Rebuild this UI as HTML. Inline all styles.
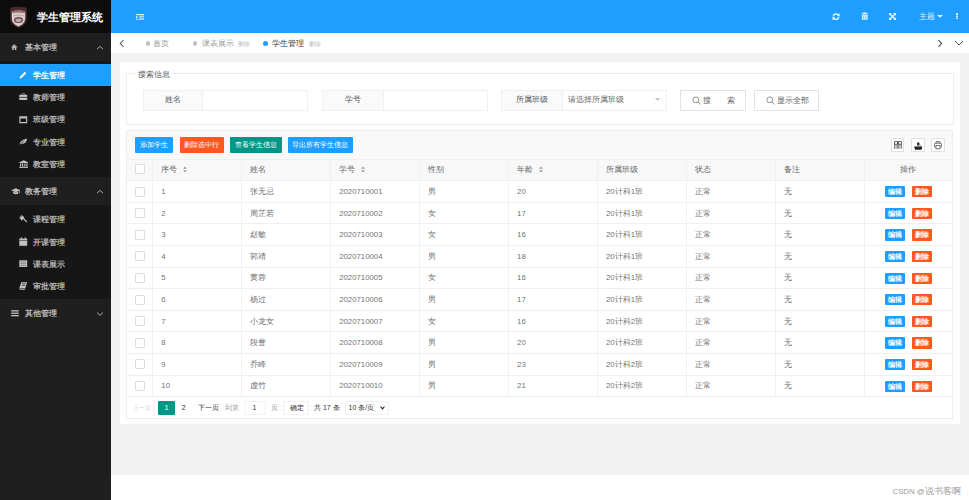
<!DOCTYPE html><html><head><meta charset="utf-8"><style>
*{box-sizing:border-box;margin:0;padding:0}
html,body{width:969px;height:500px;overflow:hidden;background:#fff;font-family:"Liberation Sans",sans-serif;color:#666}
.a{position:absolute}
.t{position:absolute;white-space:nowrap}
#side{left:0;top:0;width:111px;height:500px;background:#1f1f1f}
#logo{left:0;top:0;width:111px;height:33px;background:#0c0c0c}
#title{left:37px;top:8.7px;font-size:11px;font-weight:bold;color:#fff;line-height:16px}
#head{left:111px;top:0;width:858px;height:33px;background:#1E9FFF}
#tabs{left:111px;top:33px;width:858px;height:20px;background:#fff}
#main{left:111px;top:53px;width:858px;height:422px;background:#f2f2f2}
.nh{left:0;width:111px;height:28px;background:#1f1f1f}
.nc{left:0;width:111px;background:#161616}
.ni{left:0;width:111px;height:22.2px}
.ni.on{background:#1E9FFF}
.nt{font-size:8px;line-height:10px;color:#b3afaf;font-weight:bold}
.card{background:#fff}
.bx{position:absolute;border:1px solid #f0f0f0;background:#fff}
.lab{position:absolute;border:1px solid #f0f0f0;background:#fafafa}
.btn{position:absolute;color:#fff;font-size:6.8px;line-height:16px;text-align:center;border-radius:1px}
.cell{position:absolute;font-size:7.8px;line-height:10px;color:#737373;white-space:nowrap}
.hl{position:absolute;height:1px;background:#efefef}
.vl{position:absolute;width:1px;background:#f1f1f1}
.cbx{position:absolute;width:10px;height:10px;border:1px solid #dedede;background:#fff;border-radius:1px}
.sb{position:absolute;font-size:6.5px;line-height:11.2px;font-weight:bold;color:#fff;text-align:center;border-radius:1px}
</style></head><body>
<div id="side" class="a"></div><div id="logo" class="a"></div>
<svg class="a" style="left:9px;top:6px" width="19" height="23" viewBox="0 0 19 23">
<path d="M1.2 3 Q1.2 1.4 3 1.2 Q9.5 0.2 16 1.2 Q17.8 1.4 17.8 3 L17.8 12.5 Q17.8 19 9.5 22.2 Q1.2 19 1.2 12.5 Z" fill="#4a2a2a"/>
<path d="M2.8 5.2 Q9.5 4 16.2 5.2 L16.2 12.5 Q16.2 17.8 9.5 20.4 Q2.8 17.8 2.8 12.5 Z" fill="#dccdcd"/>
<path d="M2.8 5.2 Q9.5 4 16.2 5.2 L16.2 7 Q9.5 6 2.8 7 Z" fill="#8c6c6c"/>
<ellipse cx="9.5" cy="14" rx="4.6" ry="3.1" fill="#6e5050"/>
<ellipse cx="9.5" cy="14.2" rx="3" ry="1.8" fill="#bca8a8"/>
<path d="M4.5 9.6 Q9.5 8.2 14.5 9.6" stroke="#a89090" stroke-width="0.7" fill="none"/>
</svg>
<div id="title" class="t">学生管理系统</div>
<div id="head" class="a"></div><div id="tabs" class="a"></div><div id="main" class="a"></div>
<div class="a nh" style="top:33px"></div>
<div class="t nt" style="left:24.5px;top:42.9px;color:#bbb7b7">基本管理</div>
<svg class="a" style="left:95.5px;top:44.8px" width="8" height="6" viewBox="0 0 8 6"><path d="M1 4.2 L4 1.3 L7 4.2" stroke="#bdbdbd" stroke-width="0.9" fill="none"/></svg>
<div class="a nc" style="top:61px;height:116.2px"></div>
<div class="a ni on" style="top:63.8px"></div>
<div class="t nt" style="left:33px;top:70.89999999999999px;color:#fff">学生管理</div>
<div class="a ni" style="top:86.0px"></div>
<div class="t nt" style="left:33px;top:93.1px;">教师管理</div>
<div class="a ni" style="top:108.19999999999999px"></div>
<div class="t nt" style="left:33px;top:115.29999999999998px;">班级管理</div>
<div class="a ni" style="top:130.39999999999998px"></div>
<div class="t nt" style="left:33px;top:137.49999999999997px;">专业管理</div>
<div class="a ni" style="top:152.6px"></div>
<div class="t nt" style="left:33px;top:159.7px;">教室管理</div>
<div class="a nh" style="top:177.2px"></div>
<div class="t nt" style="left:24.5px;top:187.1px;color:#bbb7b7">教务管理</div>
<svg class="a" style="left:95.5px;top:189.0px" width="8" height="6" viewBox="0 0 8 6"><path d="M1 4.2 L4 1.3 L7 4.2" stroke="#bdbdbd" stroke-width="0.9" fill="none"/></svg>
<div class="a nc" style="top:205.2px;height:94.1px"></div>
<div class="a ni" style="top:208.3px"></div>
<div class="t nt" style="left:33px;top:215.4px;">课程管理</div>
<div class="a ni" style="top:230.5px"></div>
<div class="t nt" style="left:33px;top:237.6px;">开课管理</div>
<div class="a ni" style="top:252.70000000000002px"></div>
<div class="t nt" style="left:33px;top:259.8px;">课表展示</div>
<div class="a ni" style="top:274.9px"></div>
<div class="t nt" style="left:33px;top:282.0px;">审批管理</div>
<div class="a nh" style="top:299.3px"></div>
<div class="t nt" style="left:24.5px;top:309.2px;color:#bbb7b7">其他管理</div>
<svg class="a" style="left:95.5px;top:311.1px" width="8" height="6" viewBox="0 0 8 6"><path d="M1 1.5 L4 4.4 L7 1.5" stroke="#bdbdbd" stroke-width="0.9" fill="none"/></svg>
<svg class="a" style="left:11px;top:44px" width="6.5" height="6" viewBox="0 0 6.5 6"><path d="M0.1 2.9 L3.25 0.2 L6.4 2.9 L5.8 3.5 L3.25 1.4 L0.7 3.5 Z" fill="#c4c0c0"/><path d="M1.2 3.2 L3.25 1.6 L5.3 3.2 V5.9 H3.9 V4.3 H2.6 V5.9 H1.2 Z" fill="#c4c0c0"/></svg>
<svg class="a" style="left:19px;top:71px" width="8" height="8" viewBox="0 0 8 8"><path d="M0.6 7.4 L1.1 5.4 L5.8 0.7 L7.3 2.2 L2.6 6.9 Z" fill="#fff"/></svg>
<svg class="a" style="left:19px;top:92.5px" width="8.5" height="7.5" viewBox="0 0 8.5 7.5"><path d="M2.8 0.5 H5.7 V1.8 H8.2 V7.2 H0.3 V1.8 H2.8 Z M3.4 1.1 V1.8 H5.1 V1.1 Z" fill="#c4c0c0" fill-rule="evenodd"/><rect x="0.3" y="3.9" width="7.9" height="0.7" fill="#161616"/></svg>
<svg class="a" style="left:19px;top:116px" width="8.5" height="7.5" viewBox="0 0 8.5 7.5"><path d="M0.3 0.3 H8.2 V7.2 H0.3 Z M1.4 2.4 V6.1 H7.1 V2.4 Z" fill="#c4c0c0" fill-rule="evenodd"/></svg>
<svg class="a" style="left:19px;top:137.5px" width="8.5" height="7" viewBox="0 0 8.5 7"><path d="M0.5 6.8 Q1 2 8 0.5 Q7.5 6 2.5 5.8 Q1.8 6 0.5 6.8 Z" fill="#c4c0c0"/><path d="M1 6.5 Q3 4 5.5 2.8" stroke="#151515" stroke-width="0.6" fill="none"/></svg>
<svg class="a" style="left:18.5px;top:160px" width="9.5" height="8" viewBox="0 0 9.5 8"><path d="M0.3 2.3 L4.75 0.2 L9.2 2.3 V2.9 H0.3 Z" fill="#c4c0c0"/><rect x="1" y="3.4" width="1.2" height="3" fill="#c4c0c0"/><rect x="3" y="3.4" width="1.2" height="3" fill="#c4c0c0"/><rect x="5.3" y="3.4" width="1.2" height="3" fill="#c4c0c0"/><rect x="7.3" y="3.4" width="1.2" height="3" fill="#c4c0c0"/><rect x="0.3" y="6.7" width="8.9" height="1.2" fill="#c4c0c0"/></svg>
<svg class="a" style="left:11px;top:188px" width="9.5" height="7" viewBox="0 0 9.5 7"><path d="M0.2 2.2 L4.75 0.2 L9.3 2.2 L4.75 4.2 Z" fill="#c4c0c0"/><path d="M2.2 3.4 V5.6 Q4.75 7 7.3 5.6 V3.4 L4.75 4.6 Z" fill="#c4c0c0"/><rect x="8.2" y="2.2" width="0.6" height="3.2" fill="#c4c0c0"/></svg>
<svg class="a" style="left:19px;top:215.3px" width="8.5" height="8" viewBox="0 0 8.5 8"><path d="M0.6 3.2 L3.4 0.4 L5.4 2.4 L2.6 5.2 Z" fill="#c4c0c0"/><path d="M3.8 3.6 L4.6 2.8 L8.2 6.6 L7.4 7.4 Z" fill="#c4c0c0"/><path d="M0.2 2.4 L2.6 0 L3 0.4 L0.6 2.8 Z M2.2 5.4 L4.6 3 L5 3.4 L2.6 5.8 Z" fill="#c4c0c0"/></svg>
<svg class="a" style="left:19px;top:236.5px" width="8.5" height="9" viewBox="0 0 8.5 9"><rect x="0.3" y="1.6" width="7.9" height="7.2" fill="#c4c0c0"/><rect x="1.8" y="0.2" width="1" height="2.3" fill="#c4c0c0"/><rect x="5.7" y="0.2" width="1" height="2.3" fill="#c4c0c0"/><rect x="0.3" y="3.2" width="7.9" height="0.5" fill="#161616"/></svg>
<svg class="a" style="left:19px;top:259.5px" width="8.5" height="7.5" viewBox="0 0 8.5 7.5"><path d="M0.3 0.3 H8.2 V7.2 H0.3 Z" fill="#c4c0c0"/><rect x="1.3" y="1.6" width="5.9" height="0.7" fill="#777"/><rect x="1.3" y="3.4" width="5.9" height="0.7" fill="#777"/><rect x="1.3" y="5.2" width="5.9" height="0.7" fill="#777"/></svg>
<svg class="a" style="left:19px;top:282px" width="8.5" height="8" viewBox="0 0 8.5 8"><path d="M2.2 0.3 H8.2 L6.3 6.2 H0.4 Z" fill="#c4c0c0"/><path d="M0.4 6.2 Q0 7.6 1.2 7.7 H6 L6.3 6.8 H1.5 Z" fill="#c4c0c0"/><rect x="3" y="1.6" width="3.6" height="0.6" fill="#161616"/><rect x="2.6" y="2.9" width="3.6" height="0.6" fill="#161616"/></svg>
<svg class="a" style="left:10.5px;top:310px" width="8" height="6.5" viewBox="0 0 8 6.5"><rect x="0.2" y="0.2" width="7.6" height="1.3" fill="#c4c0c0"/><rect x="0.2" y="2.6" width="7.6" height="1.3" fill="#c4c0c0"/><rect x="0.2" y="5" width="7.6" height="1.3" fill="#c4c0c0"/></svg>
<div class="a" style="left:106px;top:33px;width:1px;height:31px;background:rgba(0,0,0,.12)"></div>
<div class="a" style="left:106px;top:86px;width:1px;height:389px;background:rgba(0,0,0,.12)"></div>
<svg class="a" style="left:119px;top:39.4px" width="6" height="9" viewBox="0 0 6 9"><path d="M4.5 1 L1.3 4.5 L4.5 8" stroke="#555" stroke-width="1.1" fill="none"/></svg>
<svg class="a" style="left:936.5px;top:39.4px" width="7" height="9" viewBox="0 0 7 9"><path d="M1.5 1.2 L4.6 4.5 L1.5 7.8" stroke="#555" stroke-width="1.1" fill="none"/></svg>
<svg class="a" style="left:954px;top:40.4px" width="10" height="6" viewBox="0 0 10 6"><path d="M1 1 L5 5 L9 1" stroke="#555" stroke-width="1" fill="none"/></svg>
<div class="a" style="left:146px;top:41.4px;width:4.4px;height:4.4px;border-radius:50%;background:#c2c2c2"></div>
<div class="t" style="left:153px;top:38.9px;font-size:7.6px;line-height:10px;color:#999">首页</div>
<div class="a" style="left:193px;top:41.4px;width:4.4px;height:4.4px;border-radius:50%;background:#c2c2c2"></div>
<div class="t" style="left:202px;top:38.9px;font-size:7.6px;line-height:10px;color:#999">课表展示</div>
<div class="t" style="left:238px;top:40.4px;font-size:6.2px;line-height:8px;color:#b8b8b8">删除</div>
<div class="a" style="left:263px;top:41.2px;width:5px;height:5px;border-radius:50%;background:#1E9FFF"></div>
<div class="t" style="left:272px;top:38.9px;font-size:7.8px;line-height:10px;color:#333">学生管理</div>
<div class="t" style="left:308.5px;top:40.4px;font-size:6.2px;line-height:8px;color:#b8b8b8">删除</div>
<svg class="a" style="left:135.8px;top:13.8px" width="8" height="6.4" viewBox="0 0 8 6.4">
<rect x="0" y="0" width="8" height="1.1" fill="#cdeef0"/>
<rect x="3" y="1.7" width="5" height="1.1" fill="#bfe6e8"/>
<rect x="3" y="3.5" width="5" height="1.1" fill="#bfe6e8"/>
<rect x="0" y="5.3" width="8" height="1.1" fill="#cdeef0"/>
<path d="M0 1.6 L2.3 3.2 L0 4.8 Z" fill="#bfe6e8"/></svg>
<svg class="a" style="left:831.8px;top:12.5px" width="8" height="7.5" viewBox="0 0 8 7.5">
<path d="M1.2 3.3 A2.9 2.9 0 0 1 6.3 2.1" stroke="#e6f4ff" stroke-width="1.5" fill="none"/><path d="M7.6 0.3 L7.6 3.3 L4.6 3.3 Z" fill="#e6f4ff"/>
<path d="M6.8 4.2 A2.9 2.9 0 0 1 1.7 5.4" stroke="#e6f4ff" stroke-width="1.5" fill="none"/><path d="M0.4 7.2 L0.4 4.2 L3.4 4.2 Z" fill="#e6f4ff"/></svg>
<svg class="a" style="left:860.5px;top:12.3px" width="7.5" height="8" viewBox="0 0 7.5 8">
<path d="M0.3 2.6 Q0.8 0.3 3.75 0.3 Q6.7 0.3 7.2 2.6 Z" fill="#e6f4ff" opacity="0.9"/>
<path d="M0.8 3 H6.7 V7.8 H0.8 Z" fill="#e6f4ff" opacity="0.85"/>
<rect x="2.3" y="3.8" width="0.7" height="3.4" fill="#7cc6ff"/><rect x="4.5" y="3.8" width="0.7" height="3.4" fill="#7cc6ff"/></svg>
<svg class="a" style="left:889.2px;top:13px" width="7" height="7" viewBox="0 0 7 7">
<path d="M0 0 L2.8 0 L0 2.8 Z M7 0 L4.2 0 L7 2.8 Z M0 7 L2.8 7 L0 4.2 Z M7 7 L4.2 7 L7 4.2 Z" fill="#e6f4ff"/>
<path d="M0.8 0.8 L6.2 6.2 M6.2 0.8 L0.8 6.2" stroke="#e6f4ff" stroke-width="1.4"/></svg>
<div class="t" style="left:919px;top:11.7px;font-size:7.8px;line-height:10px;color:#dcf0ff">主题</div>
<svg class="a" style="left:937.4px;top:14.6px" width="6" height="3" viewBox="0 0 6 3"><path d="M0 0 L6 0 L3 2.8 Z" fill="#e6f4ff"/></svg>
<div class="a" style="left:956.4px;top:13px;width:1.8px;height:6.4px;background:#d6eeff"></div>
<div class="a" style="left:956.4px;top:15px;width:1.8px;height:0.5px;background:#6cbfff"></div>
<div class="a" style="left:956.4px;top:17px;width:1.8px;height:0.5px;background:#6cbfff"></div>
<div class="a card" style="left:120px;top:62px;width:840px;height:361.5px"></div>
<div class="a" style="left:126px;top:73px;width:828px;height:52px;border:1px solid #eee"></div>
<div class="t" style="left:135px;top:69.8px;padding:0 3px;background:#fff;font-size:7.8px;line-height:10px;color:#555">搜索信息</div>
<div class="lab" style="left:143px;top:89.5px;width:60px;height:21px"></div>
<div class="t" style="left:143px;top:95.4px;width:60px;text-align:center;font-size:7.8px;line-height:10px;color:#555">姓名</div>
<div class="bx" style="left:202px;top:89.5px;width:106px;height:21px"></div>
<div class="lab" style="left:321.5px;top:89.5px;width:62px;height:21px"></div>
<div class="t" style="left:321.5px;top:95.4px;width:62px;text-align:center;font-size:7.8px;line-height:10px;color:#555">学号</div>
<div class="bx" style="left:382.5px;top:89.5px;width:105px;height:21px"></div>
<div class="lab" style="left:501px;top:89.5px;width:62px;height:21px"></div>
<div class="t" style="left:501px;top:95.4px;width:62px;text-align:center;font-size:7.8px;line-height:10px;color:#555">所属班级</div>
<div class="bx" style="left:562px;top:89.5px;width:105px;height:21px"></div>
<div class="t" style="left:567.5px;top:95.4px;font-size:7.6px;line-height:10px;color:#666">请选择所属班级</div>
<svg class="a" style="left:655px;top:98px" width="5" height="3" viewBox="0 0 5 3"><path d="M0 0 L5 0 L2.5 3 Z" fill="#c2c2c2"/></svg>
<div class="bx" style="left:680px;top:89.5px;width:65.5px;height:21px;border-color:#e2e2e2"></div>
<svg class="a" style="left:692px;top:96px" width="9" height="9" viewBox="0 0 9 9"><circle cx="3.8" cy="3.8" r="2.9" stroke="#888" stroke-width="0.9" fill="none"/><path d="M6 6 L8.4 8.4" stroke="#888" stroke-width="1"/></svg>
<div class="t" style="left:703.3px;top:95.5px;font-size:7.8px;line-height:10px;color:#666;letter-spacing:15.5px">搜索</div>
<div class="bx" style="left:754px;top:89.5px;width:64.5px;height:21px;border-color:#e2e2e2"></div>
<svg class="a" style="left:766px;top:96px" width="9" height="9" viewBox="0 0 9 9"><circle cx="3.8" cy="3.8" r="2.9" stroke="#888" stroke-width="0.9" fill="none"/><path d="M6 6 L8.4 8.4" stroke="#888" stroke-width="1"/></svg>
<div class="t" style="left:777.3px;top:95.5px;font-size:7.8px;line-height:10px;color:#666;">显示全部</div>
<div class="a" style="left:126px;top:130px;width:827px;height:289px;border:1px solid #eee"></div>
<div class="a" style="left:127px;top:131px;width:825px;height:27.80000000000001px;background:#f9f9f9"></div>
<div class="btn" style="left:134.5px;top:137px;width:38.5px;height:16px;background:#1E9FFF">添加学生</div>
<div class="btn" style="left:179.5px;top:137px;width:44.5px;height:16px;background:#FF5722">删除选中行</div>
<div class="btn" style="left:229.5px;top:137px;width:52px;height:16px;background:#009688">查看学生信息</div>
<div class="btn" style="left:287.5px;top:137px;width:65.5px;height:16px;background:#1E9FFF">导出所有学生信息</div>
<div class="bx" style="left:890.6px;top:138.3px;width:13.8px;height:14.2px;border-color:#e2e2e2"></div>
<div class="bx" style="left:910.8px;top:138.3px;width:13.8px;height:14.2px;border-color:#e2e2e2"></div>
<div class="bx" style="left:930.9px;top:138.3px;width:13.8px;height:14.2px;border-color:#e2e2e2"></div>
<svg class="a" style="left:894.2px;top:141.2px" width="8" height="8.2" viewBox="0 0 8 8.2"><path d="M0.4 0.4 H3.5 V3.2 H0.4 Z M4.5 0.4 H7.6 V3.2 H4.5 Z" stroke="#333" stroke-width="0.8" fill="none"/><path d="M0.8 3.2 V7.8 M3.1 3.2 V7.8 M4.9 3.2 V7.8 M7.2 3.2 V7.8" stroke="#333" stroke-width="0.9"/></svg>
<svg class="a" style="left:914.2px;top:141.5px" width="8.6" height="8" viewBox="0 0 8.6 8"><path d="M3 1.2 Q3 0.2 4.2 0.2 Q5.4 0.2 5.4 1.2 V3.6 H3 Z" fill="#333"/><path d="M5.6 2.2 L6.6 3 V3.8 H5.6 Z" fill="#666"/><path d="M0.2 4.4 H8.4 L7.6 7.8 H1 Z" fill="#222"/><rect x="1.5" y="3.8" width="5.6" height="0.6" fill="#888"/></svg>
<svg class="a" style="left:934.2px;top:141.2px" width="8" height="8.4" viewBox="0 0 8 8.4"><path d="M2.2 2.2 V0.5 H5.8 V2.2" fill="none" stroke="#444" stroke-width="0.7"/><path d="M1.6 6.2 H0.8 Q0.4 6.2 0.4 5.6 V3.2 Q0.4 2.2 1.6 2.2 H6.4 Q7.6 2.2 7.6 3.2 V5.6 Q7.6 6.2 7.2 6.2 H6.4" fill="none" stroke="#444" stroke-width="0.8"/><rect x="2" y="4.4" width="4" height="3.5" fill="#fff" stroke="#444" stroke-width="0.7"/></svg>
<div class="a" style="left:127px;top:158.8px;width:825px;height:21.899999999999977px;background:#f8f8f8"></div>
<div class="hl" style="left:126px;top:158.8px;width:827px"></div>
<div class="hl" style="left:126px;top:180.2px;width:827px"></div>
<div class="hl" style="left:126px;top:201.80px;width:827px"></div>
<div class="hl" style="left:126px;top:223.40px;width:827px"></div>
<div class="hl" style="left:126px;top:245.00px;width:827px"></div>
<div class="hl" style="left:126px;top:266.60px;width:827px"></div>
<div class="hl" style="left:126px;top:288.20px;width:827px"></div>
<div class="hl" style="left:126px;top:309.80px;width:827px"></div>
<div class="hl" style="left:126px;top:331.40px;width:827px"></div>
<div class="hl" style="left:126px;top:353.00px;width:827px"></div>
<div class="hl" style="left:126px;top:374.60px;width:827px"></div>
<div class="hl" style="left:126px;top:396.20px;width:827px"></div>
<div class="vl" style="left:152.00px;top:158.8px;height:237.90px"></div>
<div class="vl" style="left:240.94px;top:158.8px;height:237.90px"></div>
<div class="vl" style="left:329.88px;top:158.8px;height:237.90px"></div>
<div class="vl" style="left:418.82px;top:158.8px;height:237.90px"></div>
<div class="vl" style="left:507.76px;top:158.8px;height:237.90px"></div>
<div class="vl" style="left:596.70px;top:158.8px;height:237.90px"></div>
<div class="vl" style="left:685.64px;top:158.8px;height:237.90px"></div>
<div class="vl" style="left:774.58px;top:158.8px;height:237.90px"></div>
<div class="vl" style="left:863.52px;top:158.8px;height:237.90px"></div>
<div class="cbx" style="left:134.5px;top:164.3px"></div>
<div class="cell" style="left:161.30px;top:165.20000000000002px;color:#666;font-size:7.5px">序号</div>
<svg class="a" style="left:183.30px;top:166.4px" width="4" height="7" viewBox="0 0 4 7"><path d="M0.2 2.8 L2 0.6 L3.8 2.8 Z M0.2 4.2 L2 6.4 L3.8 4.2 Z" fill="#999"/></svg>
<div class="cell" style="left:250.24px;top:165.20000000000002px;color:#666;font-size:7.5px">姓名</div>
<div class="cell" style="left:339.18px;top:165.20000000000002px;color:#666;font-size:7.5px">学号</div>
<svg class="a" style="left:361.18px;top:166.4px" width="4" height="7" viewBox="0 0 4 7"><path d="M0.2 2.8 L2 0.6 L3.8 2.8 Z M0.2 4.2 L2 6.4 L3.8 4.2 Z" fill="#999"/></svg>
<div class="cell" style="left:428.12px;top:165.20000000000002px;color:#666;font-size:7.5px">性别</div>
<div class="cell" style="left:517.06px;top:165.20000000000002px;color:#666;font-size:7.5px">年龄</div>
<svg class="a" style="left:539.06px;top:166.4px" width="4" height="7" viewBox="0 0 4 7"><path d="M0.2 2.8 L2 0.6 L3.8 2.8 Z M0.2 4.2 L2 6.4 L3.8 4.2 Z" fill="#999"/></svg>
<div class="cell" style="left:606.00px;top:165.20000000000002px;color:#666;font-size:7.5px">所属班级</div>
<div class="cell" style="left:694.94px;top:165.20000000000002px;color:#666;font-size:7.5px">状态</div>
<div class="cell" style="left:783.88px;top:165.20000000000002px;color:#666;font-size:7.5px">备注</div>
<div class="cell" style="left:864.02px;width:88.94px;text-align:center;top:165.20000000000002px;color:#666;font-size:7.5px">操作</div>
<div class="cbx" style="left:134.5px;top:186.5px"></div>
<div class="cell" style="left:161.30px;top:187.00px">1</div>
<div class="cell" style="left:250.24px;top:187.00px;font-size:7.5px">张无忌</div>
<div class="cell" style="left:339.18px;top:187.00px">2020710001</div>
<div class="cell" style="left:428.12px;top:187.00px;font-size:7.5px">男</div>
<div class="cell" style="left:517.06px;top:187.00px">20</div>
<div class="cell" style="left:606.00px;top:187.00px">20计科1班</div>
<div class="cell" style="left:694.94px;top:187.00px;font-size:7.5px">正常</div>
<div class="cell" style="left:783.88px;top:187.00px;font-size:7.5px">无</div>
<div class="sb" style="left:885.4px;top:186.20px;width:19.2px;height:11.2px;background:#1E9FFF">编辑</div>
<div class="sb" style="left:912.4px;top:186.20px;width:20px;height:11.2px;background:#FF5722">删除</div>
<div class="cbx" style="left:134.5px;top:208.1px"></div>
<div class="cell" style="left:161.30px;top:208.60px">2</div>
<div class="cell" style="left:250.24px;top:208.60px;font-size:7.5px">周芷若</div>
<div class="cell" style="left:339.18px;top:208.60px">2020710002</div>
<div class="cell" style="left:428.12px;top:208.60px;font-size:7.5px">女</div>
<div class="cell" style="left:517.06px;top:208.60px">17</div>
<div class="cell" style="left:606.00px;top:208.60px">20计科1班</div>
<div class="cell" style="left:694.94px;top:208.60px;font-size:7.5px">正常</div>
<div class="cell" style="left:783.88px;top:208.60px;font-size:7.5px">无</div>
<div class="sb" style="left:885.4px;top:207.80px;width:19.2px;height:11.2px;background:#1E9FFF">编辑</div>
<div class="sb" style="left:912.4px;top:207.80px;width:20px;height:11.2px;background:#FF5722">删除</div>
<div class="cbx" style="left:134.5px;top:229.7px"></div>
<div class="cell" style="left:161.30px;top:230.20px">3</div>
<div class="cell" style="left:250.24px;top:230.20px;font-size:7.5px">赵敏</div>
<div class="cell" style="left:339.18px;top:230.20px">2020710003</div>
<div class="cell" style="left:428.12px;top:230.20px;font-size:7.5px">女</div>
<div class="cell" style="left:517.06px;top:230.20px">16</div>
<div class="cell" style="left:606.00px;top:230.20px">20计科1班</div>
<div class="cell" style="left:694.94px;top:230.20px;font-size:7.5px">正常</div>
<div class="cell" style="left:783.88px;top:230.20px;font-size:7.5px">无</div>
<div class="sb" style="left:885.4px;top:229.40px;width:19.2px;height:11.2px;background:#1E9FFF">编辑</div>
<div class="sb" style="left:912.4px;top:229.40px;width:20px;height:11.2px;background:#FF5722">删除</div>
<div class="cbx" style="left:134.5px;top:251.3px"></div>
<div class="cell" style="left:161.30px;top:251.80px">4</div>
<div class="cell" style="left:250.24px;top:251.80px;font-size:7.5px">郭靖</div>
<div class="cell" style="left:339.18px;top:251.80px">2020710004</div>
<div class="cell" style="left:428.12px;top:251.80px;font-size:7.5px">男</div>
<div class="cell" style="left:517.06px;top:251.80px">18</div>
<div class="cell" style="left:606.00px;top:251.80px">20计科1班</div>
<div class="cell" style="left:694.94px;top:251.80px;font-size:7.5px">正常</div>
<div class="cell" style="left:783.88px;top:251.80px;font-size:7.5px">无</div>
<div class="sb" style="left:885.4px;top:251.00px;width:19.2px;height:11.2px;background:#1E9FFF">编辑</div>
<div class="sb" style="left:912.4px;top:251.00px;width:20px;height:11.2px;background:#FF5722">删除</div>
<div class="cbx" style="left:134.5px;top:272.90000000000003px"></div>
<div class="cell" style="left:161.30px;top:273.40px">5</div>
<div class="cell" style="left:250.24px;top:273.40px;font-size:7.5px">黄蓉</div>
<div class="cell" style="left:339.18px;top:273.40px">2020710005</div>
<div class="cell" style="left:428.12px;top:273.40px;font-size:7.5px">女</div>
<div class="cell" style="left:517.06px;top:273.40px">16</div>
<div class="cell" style="left:606.00px;top:273.40px">20计科1班</div>
<div class="cell" style="left:694.94px;top:273.40px;font-size:7.5px">正常</div>
<div class="cell" style="left:783.88px;top:273.40px;font-size:7.5px">无</div>
<div class="sb" style="left:885.4px;top:272.60px;width:19.2px;height:11.2px;background:#1E9FFF">编辑</div>
<div class="sb" style="left:912.4px;top:272.60px;width:20px;height:11.2px;background:#FF5722">删除</div>
<div class="cbx" style="left:134.5px;top:294.5px"></div>
<div class="cell" style="left:161.30px;top:295.00px">6</div>
<div class="cell" style="left:250.24px;top:295.00px;font-size:7.5px">杨过</div>
<div class="cell" style="left:339.18px;top:295.00px">2020710006</div>
<div class="cell" style="left:428.12px;top:295.00px;font-size:7.5px">男</div>
<div class="cell" style="left:517.06px;top:295.00px">17</div>
<div class="cell" style="left:606.00px;top:295.00px">20计科1班</div>
<div class="cell" style="left:694.94px;top:295.00px;font-size:7.5px">正常</div>
<div class="cell" style="left:783.88px;top:295.00px;font-size:7.5px">无</div>
<div class="sb" style="left:885.4px;top:294.20px;width:19.2px;height:11.2px;background:#1E9FFF">编辑</div>
<div class="sb" style="left:912.4px;top:294.20px;width:20px;height:11.2px;background:#FF5722">删除</div>
<div class="cbx" style="left:134.5px;top:316.1px"></div>
<div class="cell" style="left:161.30px;top:316.60px">7</div>
<div class="cell" style="left:250.24px;top:316.60px;font-size:7.5px">小龙女</div>
<div class="cell" style="left:339.18px;top:316.60px">2020710007</div>
<div class="cell" style="left:428.12px;top:316.60px;font-size:7.5px">女</div>
<div class="cell" style="left:517.06px;top:316.60px">16</div>
<div class="cell" style="left:606.00px;top:316.60px">20计科2班</div>
<div class="cell" style="left:694.94px;top:316.60px;font-size:7.5px">正常</div>
<div class="cell" style="left:783.88px;top:316.60px;font-size:7.5px">无</div>
<div class="sb" style="left:885.4px;top:315.80px;width:19.2px;height:11.2px;background:#1E9FFF">编辑</div>
<div class="sb" style="left:912.4px;top:315.80px;width:20px;height:11.2px;background:#FF5722">删除</div>
<div class="cbx" style="left:134.5px;top:337.7px"></div>
<div class="cell" style="left:161.30px;top:338.20px">8</div>
<div class="cell" style="left:250.24px;top:338.20px;font-size:7.5px">段誉</div>
<div class="cell" style="left:339.18px;top:338.20px">2020710008</div>
<div class="cell" style="left:428.12px;top:338.20px;font-size:7.5px">男</div>
<div class="cell" style="left:517.06px;top:338.20px">20</div>
<div class="cell" style="left:606.00px;top:338.20px">20计科2班</div>
<div class="cell" style="left:694.94px;top:338.20px;font-size:7.5px">正常</div>
<div class="cell" style="left:783.88px;top:338.20px;font-size:7.5px">无</div>
<div class="sb" style="left:885.4px;top:337.40px;width:19.2px;height:11.2px;background:#1E9FFF">编辑</div>
<div class="sb" style="left:912.4px;top:337.40px;width:20px;height:11.2px;background:#FF5722">删除</div>
<div class="cbx" style="left:134.5px;top:359.3px"></div>
<div class="cell" style="left:161.30px;top:359.80px">9</div>
<div class="cell" style="left:250.24px;top:359.80px;font-size:7.5px">乔峰</div>
<div class="cell" style="left:339.18px;top:359.80px">2020710009</div>
<div class="cell" style="left:428.12px;top:359.80px;font-size:7.5px">男</div>
<div class="cell" style="left:517.06px;top:359.80px">23</div>
<div class="cell" style="left:606.00px;top:359.80px">20计科2班</div>
<div class="cell" style="left:694.94px;top:359.80px;font-size:7.5px">正常</div>
<div class="cell" style="left:783.88px;top:359.80px;font-size:7.5px">无</div>
<div class="sb" style="left:885.4px;top:359.00px;width:19.2px;height:11.2px;background:#1E9FFF">编辑</div>
<div class="sb" style="left:912.4px;top:359.00px;width:20px;height:11.2px;background:#FF5722">删除</div>
<div class="cbx" style="left:134.5px;top:380.90000000000003px"></div>
<div class="cell" style="left:161.30px;top:381.40px">10</div>
<div class="cell" style="left:250.24px;top:381.40px;font-size:7.5px">虚竹</div>
<div class="cell" style="left:339.18px;top:381.40px">2020710010</div>
<div class="cell" style="left:428.12px;top:381.40px;font-size:7.5px">男</div>
<div class="cell" style="left:517.06px;top:381.40px">21</div>
<div class="cell" style="left:606.00px;top:381.40px">20计科2班</div>
<div class="cell" style="left:694.94px;top:381.40px;font-size:7.5px">正常</div>
<div class="cell" style="left:783.88px;top:381.40px;font-size:7.5px">无</div>
<div class="sb" style="left:885.4px;top:380.60px;width:19.2px;height:11.2px;background:#1E9FFF">编辑</div>
<div class="sb" style="left:912.4px;top:380.60px;width:20px;height:11.2px;background:#FF5722">删除</div>
<div class="t" style="left:133.2px;top:402.90000000000003px;font-size:6.3px;line-height:10px;color:#d2d2d2">上一页</div>
<div class="a" style="left:158px;top:400.8px;width:17px;height:14px;background:#009688;border-radius:1px"></div>
<div class="t" style="left:158px;width:17px;text-align:center;top:402.5px;font-size:7.4px;line-height:10px;color:#fff">1</div>
<div class="t" style="left:181.5px;top:402.5px;font-size:7.4px;line-height:10px;color:#333">2</div>
<div class="t" style="left:198px;top:402.5px;font-size:7px;line-height:10px;color:#333">下一页</div>
<div class="t" style="left:224.5px;top:402.5px;font-size:6.8px;line-height:10px;color:#999">到第</div>
<div class="bx" style="left:243.5px;top:400.8px;width:22px;height:14.5px;border-color:#f2f2f2"></div>
<div class="t" style="left:252.5px;top:402.8px;font-size:7px;line-height:10px;color:#333">1</div>
<div class="t" style="left:271px;top:402.5px;font-size:6.8px;line-height:10px;color:#999">页</div>
<div class="bx" style="left:283.3px;top:400.8px;width:25.5px;height:14.5px;border-color:#f2f2f2"></div>
<div class="t" style="left:289.5px;top:402.8px;font-size:6.6px;line-height:10px;color:#333">确定</div>
<div class="t" style="left:314px;top:402.5px;font-size:7px;line-height:10px;color:#333">共 17 条</div>
<div class="bx" style="left:345px;top:400.8px;width:43.5px;height:14.5px;border-color:#f2f2f2"></div>
<div class="t" style="left:348.6px;top:402.8px;font-size:7px;line-height:10px;color:#333">10 条/页</div>
<svg class="a" style="left:380px;top:406.3px" width="5" height="4" viewBox="0 0 5 4"><path d="M0.5 0.5 L2.5 2.8 L4.5 0.5" stroke="#222" stroke-width="1.1" fill="none"/></svg>
<div class="t" style="left:892.5px;top:485.5px;font-size:7.8px;line-height:11px;color:#9a9a9a">CSDN @<span style="font-size:9.2px">说书客啊</span></div>
</body></html>
